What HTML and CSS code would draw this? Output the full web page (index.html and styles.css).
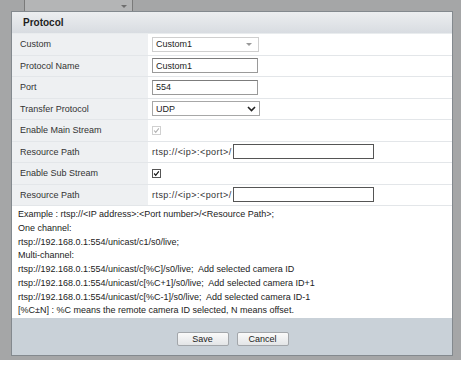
FILE: index.html
```html
<!DOCTYPE html>
<html>
<head>
<meta charset="utf-8">
<link rel="stylesheet" href="styles.css">
</head>
<body>
<div class="backdrop">
  <div class="bg-select"><span class="bg-arrow"></span></div>
  <div class="dialog">
    <div class="header">Protocol</div>
    <div class="table">
      <div class="lbl">Custom</div>
      <div class="val"><div class="sel light"><span>Custom1</span><span class="tri"></span></div></div>
      <div class="lbl">Protocol Name</div>
      <div class="val"><div class="inp">Custom1</div></div>
      <div class="lbl">Port</div>
      <div class="val"><div class="inp">554</div></div>
      <div class="lbl">Transfer Protocol</div>
      <div class="val"><div class="sel dark"><span>UDP</span><svg class="chev" width="9" height="6" viewBox="0 0 9 6"><path d="M1 1 L4.5 4.5 L8 1" fill="none" stroke="#222" stroke-width="1.6"/></svg></div></div>
      <div class="lbl">Enable Main Stream</div>
      <div class="val"><span class="cb disabled"><svg width="9" height="9" viewBox="0 0 9 9"><path d="M1.5 4.5 L3.5 6.8 L7.5 1.8" fill="none" stroke="#b0b0b0" stroke-width="1.4"/></svg></span></div>
      <div class="lbl">Resource Path</div>
      <div class="val"><span class="pre">rtsp://&lt;ip&gt;:&lt;port&gt;/</span><div class="path"></div></div>
      <div class="lbl">Enable Sub Stream</div>
      <div class="val"><span class="cb on"><svg width="9" height="9" viewBox="0 0 9 9"><path d="M1.5 4.5 L3.5 6.8 L7.5 1.8" fill="none" stroke="#111" stroke-width="1.5"/></svg></span></div>
      <div class="lbl">Resource Path</div>
      <div class="val"><span class="pre">rtsp://&lt;ip&gt;:&lt;port&gt;/</span><div class="path"></div></div>
    </div>
    <div class="info">
      <p>Example : rtsp://&lt;IP address&gt;:&lt;Port number&gt;/&lt;Resource Path&gt;;</p>
      <p>One channel:</p>
      <p>rtsp://192.168.0.1:554/unicast/c1/s0/live;</p>
      <p>Multi-channel:</p>
      <p>rtsp://192.168.0.1:554/unicast/c[%C]/s0/live;&nbsp; Add selected camera ID</p>
      <p>rtsp://192.168.0.1:554/unicast/c[%C+1]/s0/live;&nbsp; Add selected camera ID+1</p>
      <p>rtsp://192.168.0.1:554/unicast/c[%C-1]/s0/live;&nbsp; Add selected camera ID-1</p>
      <p>[%C±N] : %C means the remote camera ID selected, N means offset.</p>
    </div>
    <div class="footer">
      <button class="btn">Save</button>
      <button class="btn">Cancel</button>
    </div>
  </div>
</div>
</body>
</html>
```
FILE: styles.css
```css
html, body {
  margin: 0;
  padding: 0;
  background: #ffffff;
}
body {
  font-family: "Liberation Sans", Arial, sans-serif;
  font-size: 9px;
  color: #333;
}
.backdrop {
  position: relative;
  width: 461px;
  height: 360px;
  box-sizing: border-box;
  padding: 11px 8px 4px 11px;
  background: #a5a6a7;
}
.bg-select {
  position: absolute;
  left: 24px;
  top: 0;
  width: 107px;
  height: 14px;
  border: 1px solid #7a7a7a;
  border-top: none;
  background: #b4b5b6;
}
.bg-arrow {
  position: absolute;
  right: 5px;
  top: 5px;
  border-left: 3px solid transparent;
  border-right: 3px solid transparent;
  border-top: 3px solid #6e6e6e;
}
.dialog {
  position: relative;
  height: 345px;
  box-sizing: border-box;
  border: 1px solid #83898e;
  background: #c9d1d8;
  display: flex;
  flex-direction: column;
}
.header {
  height: 22px;
  line-height: 21px;
  padding-left: 11px;
  font-weight: bold;
  font-size: 10px;
  color: #1e1e1e;
  background: linear-gradient(#eceef0, #d8dce1);
  border-bottom: 1px solid #e9ecee;
  box-sizing: border-box;
}
.table {
  display: grid;
  grid-template-columns: 136px 1fr;
  grid-auto-rows: 21.5px;
  background: #fff;
}
.lbl, .val {
  border-bottom: 1px solid #e3e6e9;
  display: flex;
  align-items: center;
  box-sizing: border-box;
}
.lbl {
  background: #eef0f2;
  padding-left: 8px;
}
.val {
  padding-left: 4px;
  gap: 1px;
}
.sel, .inp {
  width: 107px;
  height: 15px;
  box-sizing: border-box;
  padding-left: 3px;
  display: flex;
  align-items: center;
  justify-content: space-between;
  background: #fff;
  color: #222;
}
.sel.light {
  border: 1px solid #cfcfcf;
  padding-right: 6px;
}
.tri {
  border-left: 3px solid transparent;
  border-right: 3px solid transparent;
  border-top: 3px solid #999;
}
.inp {
  width: 106px;
  border: 1px solid #9a9a9a;
  border-top-color: #7c7c7c;
}
.sel.dark {
  width: 108px;
  border: 1px solid #a7a7a7;
  padding-right: 3px;
}
.cb {
  width: 9px;
  height: 9px;
  box-sizing: border-box;
  display: flex;
  align-items: center;
  justify-content: center;
  background: #fff;
}
.cb svg { display: block; }
.cb.disabled { border: 1px solid #d0d0d0; }
.cb.on { border: 1px solid #555; }
.pre {
  color: #333;
  letter-spacing: 0.45px;
}
.path {
  width: 141px;
  height: 15px;
  box-sizing: border-box;
  border: 1px solid #555;
  background: #fff;
}
.info {
  height: 112px;
  box-sizing: border-box;
  background: #fff;
  padding: 2px 6px;
  color: #222;
}
.info p {
  margin: 0;
  line-height: 13.75px;
  white-space: nowrap;
}
.footer {
  flex: 1;
  display: flex;
  justify-content: center;
  align-items: flex-start;
  gap: 8px;
  padding-top: 14px;
  padding-left: 1px;
}
.btn {
  width: 52px;
  height: 14px;
  padding: 0;
  margin: 0;
  font-family: "Liberation Sans", Arial, sans-serif;
  font-size: 9px;
  color: #222;
  border: 1px solid #a3a7ab;
  border-radius: 2px;
  background: linear-gradient(#fafafa, #e3e5e7);
}
```
